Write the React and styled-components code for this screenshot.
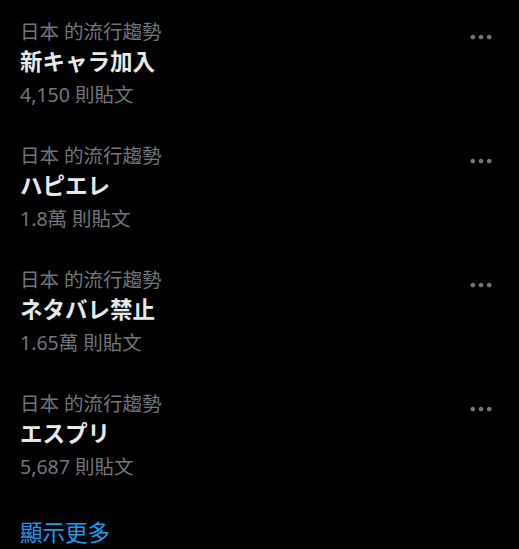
import React from "react"
import styled, { createGlobalStyle } from "styled-components"

const GlobalStyle = createGlobalStyle`
  html, body {
    margin: 0;
    padding: 0;
    background: #000;
  }
  body {
    font-family: "Noto Sans", "Noto Sans CJK TC", sans-serif;
    -webkit-font-smoothing: antialiased;
  }
`

const trends = [
  { category: "日本 的流行趨勢", title: "新キャラ加入", count: "4,150 則貼文" },
  { category: "日本 的流行趨勢", title: "ハピエレ", count: "1.8萬 則貼文" },
  { category: "日本 的流行趨勢", title: "ネタバレ禁止", count: "1.65萬 則貼文" },
  { category: "日本 的流行趨勢", title: "エスプリ", count: "5,687 則貼文" },
]

const MoreIcon = () => (
  <svg viewBox="0 0 24 24" width="28" height="28" aria-hidden="true">
    <path
      fill="currentColor"
      d="M3 12c0-1.1.9-2 2-2s2 .9 2 2-.9 2-2 2-2-.9-2-2zm9 2c1.1 0 2-.9 2-2s-.9-2-2-2-2 .9-2 2 .9 2 2 2zm7 0c1.1 0 2-.9 2-2s-.9-2-2-2-2 .9-2 2 .9 2 2 2z"
    />
  </svg>
)

const App = () => (
  <>
    <GlobalStyle />
    <Panel>
      {trends.map((t, i) => (
        <TrendItem key={i}>
          <TrendBody>
            <Category>{t.category}</Category>
            <Title>{t.title}</Title>
            <Count>{t.count}</Count>
          </TrendBody>
          <MoreButton>
            <MoreIcon />
          </MoreButton>
        </TrendItem>
      ))}
      <ShowMore>顯示更多</ShowMore>
    </Panel>
  </>
)

export default App

const Panel = styled.div`
  width: 519px;
  padding-top: 2px;
  display: flex;
  flex-direction: column;
`

const TrendItem = styled.div`
  display: flex;
  align-items: flex-start;
  padding: 18px 24px 19px 20px;
`

const TrendBody = styled.div`
  flex: 1;
  display: flex;
  flex-direction: column;
`

const Category = styled.div`
  color: #71767b;
  font-size: 19.5px;
  line-height: 24px;
`

const Title = styled.div`
  color: #e7e9ea;
  font-size: 22.5px;
  font-weight: 700;
  line-height: 30px;
  margin-top: 3px;
`

const Count = styled.div`
  color: #71767b;
  font-size: 19.5px;
  line-height: 24px;
  margin-top: 6px;
`

const MoreButton = styled.div`
  color: #71767b;
  display: flex;
  margin-top: 3px;
`

const ShowMore = styled.div`
  color: #1d9bf0;
  font-size: 22.5px;
  line-height: 30px;
  padding: 20px 20px 0;
`
